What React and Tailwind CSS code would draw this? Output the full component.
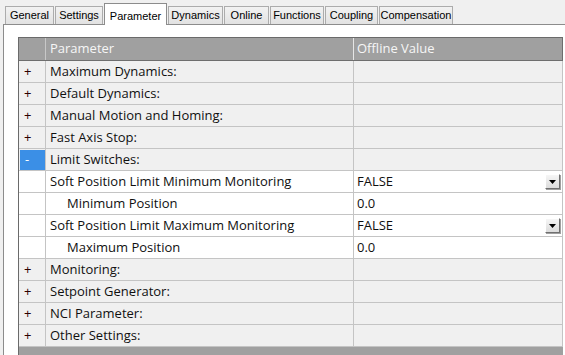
import React from 'react';

const TABS = [
  { label: 'General', w: 'w-[49px]' },
  { label: 'Settings', w: 'w-[48px]' },
  { label: 'Parameter', w: 'w-[63px]', active: true },
  { label: 'Dynamics', w: 'w-[55px]' },
  { label: 'Online', w: 'w-[45px]' },
  { label: 'Functions', w: 'w-[54px]' },
  { label: 'Coupling', w: 'w-[53px]' },
  { label: 'Compensation', w: 'w-[74px]' },
];

const ROWS = [
  { kind: 'group', label: 'Maximum Dynamics:' },
  { kind: 'group', label: 'Default Dynamics:' },
  { kind: 'group', label: 'Manual Motion and Homing:' },
  { kind: 'group', label: 'Fast Axis Stop:' },
  { kind: 'group', label: 'Limit Switches:', open: true },
  { kind: 'item', label: 'Soft Position Limit Minimum Monitoring', value: 'FALSE', combo: true },
  { kind: 'item', label: 'Minimum Position', value: '0.0', indent: true },
  { kind: 'item', label: 'Soft Position Limit Maximum Monitoring', value: 'FALSE', combo: true },
  { kind: 'item', label: 'Maximum Position', value: '0.0', indent: true },
  { kind: 'group', label: 'Monitoring:' },
  { kind: 'group', label: 'Setpoint Generator:' },
  { kind: 'group', label: 'NCI Parameter:' },
  { kind: 'group', label: 'Other Settings:' },
];

const gridFont = { fontFamily: "'Open Sans', 'Noto Sans', sans-serif" };

function ComboButton() {
  return (
    <div className="w-[15px] h-[15px] mr-[2px] flex items-center justify-center bg-gradient-to-b from-[#f6f6f6] to-[#dcdcdc] border border-t-white border-l-white border-r-[#707070] border-b-[#707070] shadow-[1px_1px_0_#a0a0a0]">
      <svg width="7" height="4" viewBox="0 0 7 4" aria-hidden="true">
        <polygon points="0,0 7,0 3.5,4" fill="#000" />
      </svg>
    </div>
  );
}

function Row({ row }) {
  const isGroup = row.kind === 'group';
  const bg = isGroup ? 'bg-[#f0f0f0]' : 'bg-white';
  return (
    <div className={`flex h-[22px] border-b border-[#c4c4c4] text-[13px] ${bg}`}>
      {/* expander column */}
      <div className="w-[27px] shrink-0 border-r border-[#c4c4c4] flex">
        {row.open ? (
          <div className="flex-1 mt-[1px] ml-[1px] bg-[#3b8fe6] text-white flex items-center pl-[5px]">-</div>
        ) : (
          <div className="flex-1 flex items-center pl-[5px] text-[#2a0000]">{isGroup ? '+' : ''}</div>
        )}
      </div>
      <div
        className={`w-[308px] shrink-0 border-r border-[#c4c4c4] flex items-center text-[#101010] whitespace-nowrap ${
          row.indent ? 'pl-[21px]' : 'pl-[4px]'
        }`}
      >
        {row.label}
      </div>
      <div className="w-[209px] shrink-0 border-r border-[#c4c4c4] flex items-center justify-between pl-[3px] text-[#101010]">
        <span>{row.value || ''}</span>
        {row.combo && <ComboButton />}
      </div>
    </div>
  );
}

export default function App() {
  return (
    <div className="w-[565px] h-[355px] bg-[#f0f0f0] overflow-hidden flex flex-col">
      {/* Tab strip */}
      <div
        className="flex items-end gap-[1px] pl-[5px] h-[24px] shrink-0 text-[11px] text-black"
        style={{ fontFamily: "'Liberation Sans', Arial, sans-serif" }}
      >
        {TABS.map((t) =>
          t.active ? (
            <div
              key={t.label}
              className={`${t.w} h-[22px] -mb-px relative z-10 bg-white border border-b-0 border-[#8c8c8c] flex items-start justify-center pt-[4px]`}
            >
              {t.label}
            </div>
          ) : (
            <div
              key={t.label}
              className={`${t.w} h-[18px] bg-gradient-to-b from-[#f2f2f2] to-[#e2e2e2] border border-b-0 border-[#acacac] flex items-center justify-center`}
            >
              {t.label}
            </div>
          )
        )}
      </div>

      {/* Tab page */}
      <div className="flex-1 ml-[3px] bg-white border-t border-l border-[#8c8c8c] pl-[14px] pt-[12px]">
        <div className="w-[545px] border-l border-t border-[#6a6a6a]" style={gridFont}>
          {/* header */}
          <div className="flex h-[23px] bg-[#a0a0a0] border-b border-[#6e6e6e] text-[13px] text-[#f6f6f6]">
            <div className="w-[27px] shrink-0 border-r border-[#c8c8c8]" />
            <div className="w-[308px] shrink-0 border-r border-[#e6e6e6] flex items-center pl-[4px]">Parameter</div>
            <div className="w-[209px] shrink-0 border-r border-[#6e6e6e] flex items-center pl-[3px]">Offline Value</div>
          </div>
          {ROWS.map((r) => (
            <Row key={r.label} row={r} />
          ))}
          <div className="h-[20px] bg-[#a0a0a0]" />
        </div>
      </div>
    </div>
  );
}
